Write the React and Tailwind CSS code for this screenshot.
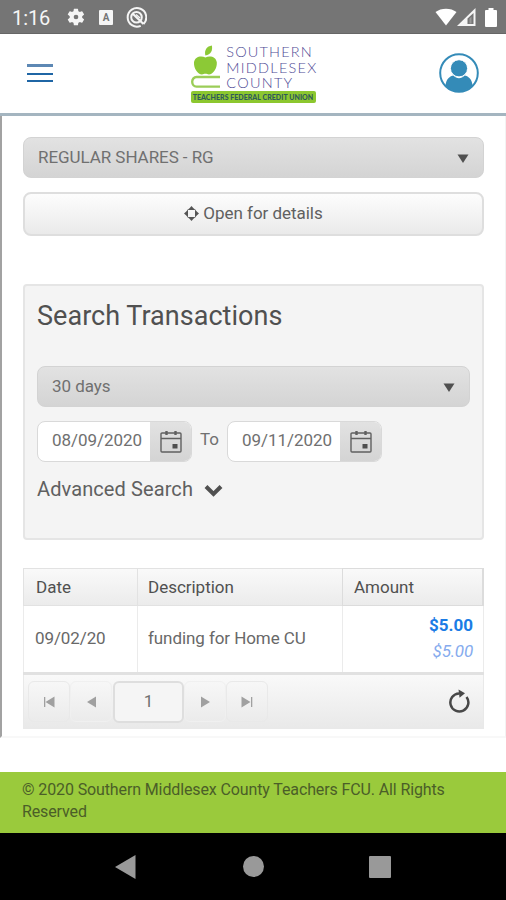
import React from "react";

const transactions = [
  {
    date: "09/02/20",
    description: "funding for Home CU",
    amount: "$5.00",
    balance: "$5.00",
  },
];

function StatusBar() {
  return (
    <div className="flex h-[34px] items-center border-b border-[#666] bg-[#757575] pl-3 pr-[9px] text-white">
      <span className="w-[54px] pt-[2px] text-[20px] leading-[24px] tracking-[-0.100px] text-[#f5f5f5]">1:16</span>
      {/* Settings */}
      <svg width="20" height="20" viewBox="0 0 24 24" fill="#f5f5f5">
        <path d="M19.4 13a7.500 7.500 0 0 0 0-2l2.100-1.600a.5.5 0 0 0 .1-.7l-2-3.400a.5.5 0 0 0-.6-.2l-2.500 1a7.300 7.300 0 0 0-1.700-1L14.400 2.400a.5.5 0 0 0-.5-.4h-4a.5.5 0 0 0-.5.4L9 5.100a7.700 7.700 0 0 0-1.700 1l-2.400-1a.5.5 0 0 0-.7.2l-2 3.400a.5.5 0 0 0 .2.7L4.500 11a7.500 7.500 0 0 0 0 2l-2.100 1.600a.5.5 0 0 0-.2.7l2 3.400c.2.200.4.300.7.200l2.400-1a7.300 7.300 0 0 0 1.700 1l.4 2.700c0 .2.200.4.500.4h4c.3 0 .5-.2.5-.4l.4-2.700a7.700 7.700 0 0 0 1.700-1l2.500 1c.2.100.5 0 .6-.2l2-3.400a.5.500 0 0 0-.1-.7z" />
        <circle cx="12" cy="12" r="2.800" fill="#757575" />
      </svg>
      {/* Keyboard */}
      <span className="ml-[13px] mt-[2px] flex h-[15px] w-[14px] items-center justify-center rounded-[1px] bg-[#f5f5f5] text-[10px] font-bold text-[#757575]">
        A
      </span>
      <svg className="ml-[13px] mt-[2px]" width="21" height="21" viewBox="0 0 21 21" fill="none" stroke="#f5f5f5">
        <path d="M17.500 17a9.300 9.300 0 1 0-2.800 1.900" strokeWidth="2" />
        <circle cx="10.500" cy="10.300" r="5.300" strokeWidth="2" />
        <path d="M7 7l10.500 10" strokeWidth="2.200" />
        <path d="M10 7.500l4 3.500" strokeWidth="1.500" />
      </svg>
      <div className="ml-auto flex items-center pt-[1px]">
        <svg width="22" height="18" viewBox="0 0 22 18" fill="#fff">
          <path d="M0.500 4C6-.5 16-.5 21.500 4L11 17.500z" />
        </svg>
        <svg width="19" height="18" viewBox="0 0 19 18">
          <path d="M0 18L18.500 0v18z" fill="#f5f5f5" />
          <path d="M10.500 16v-5.500L16.500 5v11z" fill="#757575" />
          <path d="M12.500 15.500v-5l2-1.800v6.800z" fill="#999" />
        </svg>
        <svg className="ml-[9px]" width="12" height="19" viewBox="0 0 12 19" fill="#fff">
          <path d="M3.500 0h5v2H11a1 1 0 0 1 1 1v15a1 1 0 0 1-1 1H1a1 1 0 0 1-1-1V3a1 1 0 0 1 1-1h2.500z" />
        </svg>
      </div>
    </div>
  );
}

function Logo() {
  return (
    <div className="mt-[10px] h-[60px] w-[127px]">
      <div className="flex h-[47px]">
        <svg width="30" height="47" viewBox="0 0 30 47" fill="#8cc936">
          <path d="M14.500 11.500C13 6 16 2 21 1.300c1 5-1 9.200-6.500 10.200z" />
          <path d="M14.500 13.500c4-2.500 11-1 11.500 5 .3 6-4 12-8 12-1.500 0-2-.7-3.500-.7s-2 .7-3.500.7c-4 0-8.300-6-8-12 .5-6 7.500-7.500 11.500-5z" />
          <path d="M29.500 33H5.500a4.300 4.900 0 0 0 0 9.800h24" fill="none" stroke="#9bcd58" strokeWidth="2.400" />
        </svg>
        <div className="ml-[6px] whitespace-nowrap font-['Lato'] text-[14.500px] font-light leading-[15.500px] text-[#504c96]">
          <p className="tracking-[1.150px]">SOUTHERN</p>
          <p className="tracking-[1.250px]">MIDDLESEX</p>
          <p className="tracking-[1.250px]">COUNTY</p>
        </div>
      </div>
      <p className="flex h-[12px] w-[125px] items-center justify-center whitespace-nowrap rounded-[2px] bg-[#8cc72f] font-['Lato'] text-[7px] font-black tracking-[0.050px] text-[#2f5a5a]">
        TEACHERS FEDERAL CREDIT UNION
      </p>
    </div>
  );
}

function Header() {
  return (
    <header className="flex h-[82px] justify-between border-b-[3px] border-[#a4b5c0] bg-white pl-[27px] pr-[27px]">
      <div className="mt-[30px] flex h-[18px] w-[26px] flex-col justify-between">
        <span className="h-[3px] bg-[#5d88b4]" />
        <span className="h-[2px] bg-[#1f66a5]" />
        <span className="h-[2px] bg-[#1f66a5]" />
      </div>
      <div className="ml-4">
        <Logo />
      </div>
      <svg className="mt-[19px]" width="40" height="40" viewBox="0 0 40 40">
        <circle cx="20" cy="20" r="18.800" fill="#fff" stroke="#348bb8" strokeWidth="2" />
        <path d="M6.500 32.500C7 26 11 23 14.500 22.500c3 3.500 8 3.500 11 0C29 23 33 26 33.500 32.500c-7 8-20 8-27 0z" fill="#348bb8" />
        <circle cx="20" cy="15.300" r="8.600" fill="#348bb8" stroke="#fff" />
      </svg>
    </header>
  );
}

function Select({ label }) {
  return (
    <div className="flex h-[41px] items-center justify-between rounded-lg border border-[#d3d3d3] bg-linear-to-b from-[#e2e2e2] to-[#d4d4d4] pl-[14px] pr-[14px] tracking-[-0.060px] text-[#707070]">
      {label}
      <svg className="mt-[2px]" width="12" height="9" viewBox="0 0 12 9">
        <path d="M0.500 0.500h11L6 9z" fill="#505050" />
      </svg>
    </div>
  );
}

function DateField({ value }) {
  return (
    <div className="flex h-[41px] w-[155px] overflow-hidden rounded-lg border border-[#d9d9d9] bg-white">
      <span className="flex flex-1 items-center pb-px pl-[14px] text-[17px] tracking-[-0.050px] text-[#707070]">
        {value}
      </span>
      <span className="flex w-[41px] items-center justify-center bg-linear-to-b from-[#e2e2e2] to-[#d4d4d4]">
        <svg width="22" height="23" viewBox="0 0 22 23" fill="none" stroke="#606060">
          <rect x="1" y="3" width="20" height="19" rx="1" strokeWidth="1.400" />
          <path d="M1 8.500h20" strokeWidth="1.400" />
          <path d="M6.500 1v4M15.500 1v4" strokeWidth="2.400" />
          <rect x="12.500" y="14" width="5" height="4.500" fill="#505050" stroke="none" />
        </svg>
      </span>
    </div>
  );
}

function SearchPanel() {
  return (
    <section className="mt-12 h-[256px] rounded border-2 border-[#e5e5e5] bg-[#f4f4f4] px-3">
      <h2 className="mt-[13px] text-[27px] leading-[34px] tracking-[0.030px] text-[#505050]">
        Search Transactions
      </h2>
      <div className="mt-[33px]">
        <Select label="30 days" />
      </div>
      <div className="mt-[14px] flex">
        <DateField value="08/09/2020" />
        <span className="w-[35px] pt-[6px] text-center text-[#707070]">To</span>
        <DateField value="09/11/2020" />
      </div>
      <div className="mt-[13px] flex items-center text-[20px] leading-[28px] tracking-[0.100px] text-[#606060]">
        Advanced Search
        <svg className="ml-[11px] mt-[3px]" width="19" height="13" viewBox="0 0 19 13" fill="none">
          <path d="M2 2.500l7.500 7.500L17 2.500" stroke="#505050" strokeWidth="4" />
        </svg>
      </div>
    </section>
  );
}

function PagerButton({ first, children }) {
  return (
    <span
      className={
        first
          ? "flex h-[41px] w-[42px] items-center justify-center rounded-md border border-[#e9e9e9]"
          : "flex h-[41px] w-[42px] items-center justify-center rounded-md border border-[#f0f0f0]"
      }
    >
      <svg width="12" height="12" viewBox="0 0 12 12" fill="#a0a0a0">
        {children}
      </svg>
    </span>
  );
}

function Pager() {
  return (
    <div className="flex h-[54px] items-start border-x border-b border-[#e9e9e9] bg-linear-to-b from-[#f9f9f9] to-[#e9e9e9] pl-1 pt-[6px]">
      <PagerButton first>
        <path d="M1 1h1.300v10H1zM11.500 0.500v11L2.500 6z" />
      </PagerButton>
      <PagerButton>
        <path d="M11 0.500v11L2 6z" />
      </PagerButton>
      <span className="ml-[1px] flex h-[42px] w-[71px] items-center justify-center rounded-md border-2 border-[#dedede] bg-[#f5f5f5] text-[#707070]">
        1
      </span>
      <PagerButton>
        <path d="M2 0.500v11L11 6z" />
      </PagerButton>
      <PagerButton first>
        <path d="M0.500 0.500v11l9-5.500zM10 1h1.300v10H10z" />
      </PagerButton>
      {/* Refresh */}
      <svg className="ml-auto mr-[13px] mt-[8px]" width="22" height="24" viewBox="0 0 22 24">
        <path d="M18.500 8A9 9 0 1 1 11 4.500" fill="none" stroke="#484848" strokeWidth="2.500" />
        <path d="M10.500 0.500l6.500 3.700-5.500 4.600z" fill="#484848" />
      </svg>
    </div>
  );
}

function TransactionTable() {
  return (
    <section className="mt-7">
      <table className="w-full table-fixed border-separate border-spacing-0 text-left">
        <colgroup>
          <col className="w-[115px]" />
          <col className="w-[204px]" />
          <col />
        </colgroup>
        <thead>
          <tr className="h-[38px] bg-linear-to-b from-[#fafafa] to-[#ebebeb] text-[#505050]">
            <th className="border border-[#e2e2e2] pl-3 pt-[2px] font-normal">Date</th>
            <th className="border-y border-[#e2e2e2] pl-[10px] pt-[2px] font-normal tracking-[-0.020px]">Description</th>
            <th className="border-y border-l border-r-2 border-[#dcdcdc] pl-[11px] pt-[2px] font-normal">Amount</th>
          </tr>
        </thead>
        <tbody>
          {transactions.map((row) => (
            <tr key={row.date} className="h-[66px] text-[#686868]">
              <td className="border-x border-[#ebebeb] pl-[11px] tracking-[-0.100px]">{row.date}</td>
              <td className="pl-[10px] tracking-[-0.080px]">{row.description}</td>
              <td className="border-x border-[#ebebeb] pb-[2px] pr-[10px] text-right leading-[26px]">
                <p className="font-bold text-[#1b7ce5]">{row.amount}</p>
                <p className="tracking-[-0.200px] italic text-[#86abee]">{row.balance}</p>
              </td>
            </tr>
          ))}
        </tbody>
      </table>
      <div className="h-[3px] bg-[#e1e1e1]" />
      <Pager />
    </section>
  );
}

function App() {
  return (
    <div className="flex h-[900px] w-[506px] flex-col overflow-hidden bg-white font-['Roboto',sans-serif] text-[17px]">
      <StatusBar />
      <Header />
      <main className="h-[622px] border-b-2 border-l-2 border-r border-b-[#f8f8f8] border-l-[#a2a2a2] border-r-[#f3f3f3] pl-[21px] pr-[21px] pt-[21px]">
        <Select label="REGULAR SHARES - RG" />
        <div className="mt-[14px] flex h-[44px] items-center justify-center rounded-lg border-2 border-[#dedede] bg-linear-to-b from-[#fdfdfd] to-[#eaeaea] pb-px tracking-[-0.040px] text-[#606060]">
          <svg className="mr-1" width="15" height="15" viewBox="0 0 15 15" fill="#555">
            <rect x="3.200" y="3.200" width="8.600" height="8.600" rx="2" fill="none" stroke="#888" />
            <path d="M7.500 0L11 4H4zM7.500 15L4 11h7zM0 7.500L4 4v7zM15 7.500L11 11V4z" />
          </svg>
          Open for details
        </div>
        <SearchPanel />
        <TransactionTable />
      </main>
      <footer className="mt-[34px] h-[61px] bg-[#9aca3c] pl-[22px] pr-10 pt-[7px] text-[16px] leading-[22px] tracking-[-0.120px] text-[#4b5e28]">
        © 2020 Southern Middlesex County Teachers FCU. All Rights Reserved
      </footer>
      {/* Android navigation */}
      <nav className="flex h-[67px] items-center bg-black pl-[115px]">
        <svg width="21" height="24" viewBox="0 0 21 24" fill="#999">
          <path d="M0 12L20.500 0v24z" />
        </svg>
        <span className="ml-[107px] size-[21px] rounded-full bg-[#999]" />
        <span className="ml-[105px] size-[22px] rounded-[1px] bg-[#999]" />
      </nav>
    </div>
  );
}

export default App;
